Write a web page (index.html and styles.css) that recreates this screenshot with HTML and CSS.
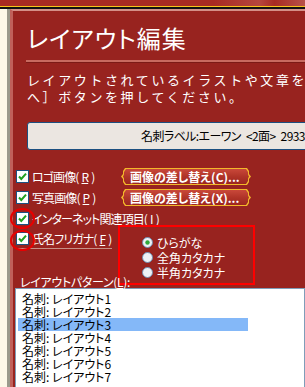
FILE: index.html
```html
<!DOCTYPE html>
<html lang="ja">
<head>
    <meta charset="UTF-8">
    <meta name="viewport" content="width=device-width, initial-scale=1.0">
    <title>レイアウト編集</title>
    <link rel="stylesheet" href="styles.css">
</head>
<body>
    <div class="topbar"></div>
    <div class="main">
        <div class="sidebar"></div>
        <div class="panel">
            <h1 class="title">レイアウト編集</h1>
            <div class="rule"></div>
            <p class="lead">レイアウトされているイラストや文章を<br>へ］ボタンを押してください。</p>

            <div class="paper-box">名刺ラベル:エーワン &lt;2面&gt; 29339</div>

            <div class="options">
                <label class="check r1">
                    <svg class="cb" viewBox="0 0 13 13"><rect x="0.5" y="0.5" width="12" height="12" fill="#fff" stroke="#1c5180"/><path d="M3 6.5 L5.3 9 L10 3.6" fill="none" stroke="#21a121" stroke-width="2"/></svg>
                    ロゴ画像(<u>R</u>)
                </label>
                <div class="btn r1"><span class="btn-face">画像の差し替え(C)...</span></div>

                <label class="check r2">
                    <svg class="cb" viewBox="0 0 13 13"><rect x="0.5" y="0.5" width="12" height="12" fill="#fff" stroke="#1c5180"/><path d="M3 6.5 L5.3 9 L10 3.6" fill="none" stroke="#21a121" stroke-width="2"/></svg>
                    写真画像(<u>P</u>)
                </label>
                <div class="btn r2"><span class="btn-face">画像の差し替え(X)...</span></div>

                <label class="check r3">
                    <svg class="cb" viewBox="0 0 13 13"><rect x="0.5" y="0.5" width="12" height="12" fill="#fff" stroke="#1c5180"/><path d="M3 6.5 L5.3 9 L10 3.6" fill="none" stroke="#21a121" stroke-width="2"/></svg>
                    インターネット関連項目(<u>I</u>)
                </label>

                <label class="check r4 focused">
                    <svg class="cb" viewBox="0 0 13 13"><rect x="0.5" y="0.5" width="12" height="12" fill="#fff" stroke="#1c5180"/><path d="M3 6.5 L5.3 9 L10 3.6" fill="none" stroke="#21a121" stroke-width="2"/></svg>
                    氏名フリガナ(<u>F</u>)
                </label>

                <div class="radios">
                    <div class="radio">
                        <svg class="rb" viewBox="0 0 11 11"><circle cx="5.5" cy="5.5" r="5" fill="#eef1f6" stroke="#6f8db0"/><circle cx="5.5" cy="5.5" r="2.2" fill="#2fa83a"/></svg>
                        ひらがな
                    </div>
                    <div class="radio">
                        <svg class="rb" viewBox="0 0 11 11"><circle cx="5.5" cy="5.5" r="5" fill="#eef1f6" stroke="#6f8db0"/></svg>
                        全角カタカナ
                    </div>
                    <div class="radio">
                        <svg class="rb" viewBox="0 0 11 11"><circle cx="5.5" cy="5.5" r="5" fill="#eef1f6" stroke="#6f8db0"/></svg>
                        半角カタカナ
                    </div>
                </div>

                <div class="list-label">レイアウトパターン(<u>L</u>):</div>

                <!-- annotation marks -->
                <span class="mark mark-a"></span>
                <span class="mark mark-b"></span>
            </div>

            <ul class="patterns">
                <li>名刺: レイアウト1</li>
                <li>名刺: レイアウト2</li>
                <li class="selected">名刺: レイアウト3</li>
                <li>名刺: レイアウト4</li>
                <li>名刺: レイアウト5</li>
                <li>名刺: レイアウト6</li>
                <li>名刺: レイアウト7</li>
            </ul>
        </div>
    </div>
</body>
</html>
```

FILE: styles.css
```css
body {
    margin: 0;
    width: 305px;
    height: 387px;
    overflow: hidden;
    font-family: "Noto Sans CJK JP", "Noto Sans", sans-serif;
    font-feature-settings: "palt";
    background: #fdf8e8;
}

.topbar {
    height: 6px;
    background: linear-gradient(90deg, #a82a22 0%, #a82a22 70%, #b5463e 85%, #a82a22 90%, #b8524a 100%);
    border-bottom: 1px solid #f6c21c;
    box-shadow: 0 2px 0 #111;
    margin-bottom: 2px;
}

.main {
    display: flex;
    height: 378px;
    overflow: hidden;
}

.sidebar {
    width: 7px;
    flex: none;
    background: #fdf8e8;
    border-right: 3px solid #9b9a8c;
}

.panel {
    flex: 1;
    min-width: 0;
    background: #98231f;
    border-left: 3px solid #c0605a;
    border-top: 2px solid #d49088;
    color: #fff;
}

.title {
    margin: 12px 0 0 14px;
    font-size: 24px;
    font-weight: normal;
    line-height: 30px;
    letter-spacing: 1px;
}

.rule {
    margin: 7px 0 0 13px;
    height: 2px;
    background: #c86a60;
    border-bottom: 1px solid #7c1a16;
}

.lead {
    margin: 8px 0 0 14px;
    font-size: 13px;
    line-height: 17px;
    letter-spacing: 2.6px;
    font-feature-settings: normal;
    white-space: nowrap;
}

.paper-box {
    margin: 17px 0 0 14px;
    width: 300px;
    height: 26px;
    border: 1px solid #1c4f80;
    border-radius: 3px;
    background: #ebe6e1;
    color: #000;
    font-size: 12px;
    letter-spacing: -0.6px;
    word-spacing: 3px;
    line-height: 26px;
    padding-left: 113px;
    white-space: nowrap;
}

.options {
    position: relative;
    display: grid;
    grid-template-columns: 102px 137px;
    grid-template-rows: 21px 21px 20px 21px 36px;
    margin: 16px 0 0 3px;
    font-size: 12px;
}

.check {
    display: flex;
    align-items: center;
    gap: 3px;
    grid-column: 1;
    white-space: nowrap;
    letter-spacing: -0.9px;
}

.cb {
    width: 13px;
    height: 13px;
    flex: none;
}

.r1 { grid-row: 1; }
.r2 { grid-row: 2; }
.r3 { grid-row: 3; }
.r4 { grid-row: 4; }

.focused {
    align-self: start;
    height: 20px;
    width: 96px;
    border-bottom: 1px solid #c89088;
}

.btn {
    grid-column: 2;
    align-self: center;
    margin-left: 3px;
    width: 130px;
    height: 17px;
    background: #f3b82a;
    clip-path: polygon(4px 0, 126px 0, 128px 3px, 128px 6px, 130px 8.5px, 128px 11px, 128px 14px, 126px 17px, 4px 17px, 2px 14px, 2px 11px, 0 8.5px, 2px 6px, 2px 3px);
}

.btn-face {
    display: block;
    margin: 1px 2px;
    height: 15px;
    background: linear-gradient(#c9483a, #b03428 50%, #9c2520);
    clip-path: polygon(3px 0, 123px 0, 125px 3px, 125px 5.5px, 126px 7.5px, 125px 9.5px, 125px 12px, 123px 15px, 3px 15px, 1px 12px, 1px 9.5px, 0 7.5px, 1px 5.5px, 1px 3px);
    color: #fff;
    font-weight: bold;
    font-size: 12px;
    line-height: 15px;
    padding-left: 7px;
    white-space: nowrap;
}

.radios {
    grid-column: 2;
    grid-row: 3 / 6;
    margin-top: 17px;
    border: 2px solid #f00;
    padding: 8px 0 0 22px;
}

.radio {
    display: flex;
    align-items: center;
    gap: 4px;
    height: 15px;
}

.rb {
    width: 11px;
    height: 11px;
    flex: none;
}

.list-label {
    grid-column: 1;
    grid-row: 5;
    align-self: end;
    margin: 0 0 -5px 4px;
    white-space: nowrap;
    letter-spacing: -0.3px;
}

.mark {
    position: absolute;
    width: 21px;
    height: 17px;
    border: 2px solid #e80000;
    border-radius: 50%;
}

.mark-a {
    left: -6px;
    top: 42px;
}

.mark-b {
    left: -6px;
    top: 64px;
}

.patterns {
    list-style: none;
    margin: 3px 0 0 2px;
    padding: 3px 0 0 2px;
    height: 100px;
    background: #fff;
    border: 1px solid #7f9db9;
    color: #000;
    font-size: 12px;
}

.patterns li {
    height: 13px;
    line-height: 13px;
    width: 226px;
    padding-left: 4px;
    white-space: nowrap;
}

.patterns .selected {
    background: #84b8f8;
}
```
